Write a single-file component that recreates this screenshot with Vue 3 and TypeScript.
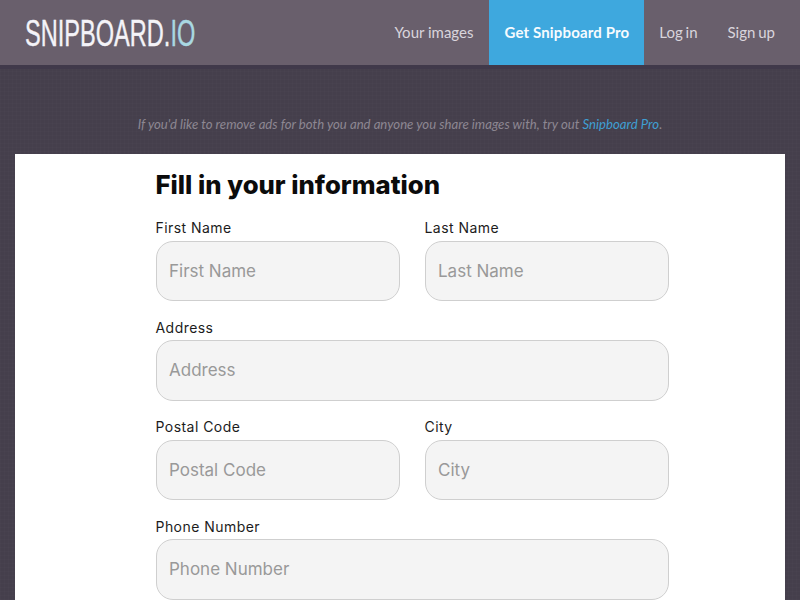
<script setup lang="ts">
const navLinks = [
  { label: 'Your images', pro: false },
  { label: 'Get Snipboard Pro', pro: true },
  { label: 'Log in', pro: false },
  { label: 'Sign up', pro: false },
]

const rows = [
  ['First Name', 'Last Name'],
  ['Address'],
  ['Postal Code', 'City'],
  ['Phone Number'],
]
</script>

<template>
  <div class="page">
    <header class="main-header">
      <a class="logo">SNIPBOARD.<span class="io">IO</span></a>
      <nav class="nav">
        <a v-for="link in navLinks" :key="link.label" :class="['nav-link', { pro: link.pro }]">{{ link.label }}</a>
      </nav>
    </header>

    <p class="notice">
      If you'd like to remove ads for both you and anyone you share images with, try out
      <a class="notice-link">Snipboard Pro</a>.
    </p>

    <main class="card">
      <div class="form">
        <h1 class="title">Fill in your information</h1>
        <div v-for="(row, i) in rows" :key="i" class="row">
          <div v-for="name in row" :key="name" class="field">
            <div class="label">{{ name }}</div>
            <div class="input">{{ name }}</div>
          </div>
        </div>
      </div>
    </main>
  </div>
</template>

<style>
html,
body {
  margin: 0;
  overflow: hidden;
}
</style>

<style scoped>
.page {
  height: 600px;
  overflow: hidden;
  font-family: Lato, sans-serif;
  background-color: #453f4c;
  background-image:
    repeating-linear-gradient(0deg, rgba(255, 255, 255, 0.012) 0 1px, transparent 1px 4px),
    repeating-linear-gradient(90deg, rgba(255, 255, 255, 0.012) 0 1px, transparent 1px 4px);
}

.main-header {
  display: flex;
  justify-content: space-between;
  height: 65px;
  padding-left: 25px;
  background-color: #695f6c;
  border-bottom: 4px solid #40394a;
}

.logo {
  display: inline-block;
  height: 65px;
  font-family: 'Liberation Sans', sans-serif;
  font-size: 37px;
  line-height: 67px;
  color: #f4f3f8;
  white-space: nowrap;
  -webkit-text-stroke: 0.4px currentColor;
  transform: scaleX(0.637);
  transform-origin: left center;
}

.io {
  color: #a9d8e2;
}

.nav {
  display: flex;
}

.nav-link {
  padding: 0 15px;
  font-size: 15px;
  line-height: 65px;
  color: #d9d5dc;
  word-spacing: -1px;
}

.nav-link:first-child {
  padding-right: 16px;
  word-spacing: 0;
}

.nav-link:last-child {
  padding-right: 25px;
}

.nav-link.pro {
  background-color: #3ea8de;
  color: #f6fbfe;
  font-weight: 700;
  letter-spacing: 0.15px;
  word-spacing: 0;
}

.notice {
  margin: 0;
  padding-top: 47px;
  height: 38px;
  text-align: center;
  font-size: 13.17px;
  font-style: italic;
  line-height: 16px;
  color: #8d8792;
}

.notice-link {
  color: #3f9fd3;
}

.card {
  margin: 0 15px;
  background-color: #fff;
  height: 600px;
}

.form {
  width: 513px;
  margin-left: 140.5px;
  padding-top: 15px;
  font-family: Inter, sans-serif;
}

.title {
  margin: 0 0 17px;
  font-size: 25.7px;
  font-weight: 800;
  line-height: 32px;
  color: #0b0b0b;
}

.row {
  display: flex;
  gap: 25px;
  margin-bottom: 16.5px;
}

.field {
  flex: 1;
}

.label {
  font-size: 14px;
  letter-spacing: 0.45px;
  line-height: 20px;
  color: #1c1c1c;
  margin-bottom: 2.5px;
}

.input {
  box-sizing: border-box;
  height: 60.5px;
  padding-left: 12.5px;
  border: 1.5px solid #cfcfcf;
  border-radius: 17px;
  background-color: #f4f4f4;
  font-size: 17px;
  line-height: 59px;
  color: #999;
}
</style>
